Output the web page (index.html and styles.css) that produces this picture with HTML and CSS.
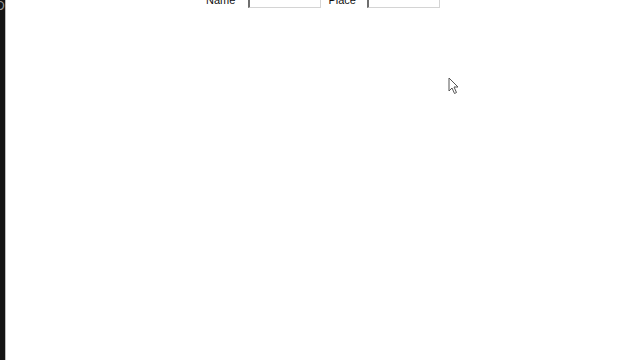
FILE: index.html
```html
<!DOCTYPE html>
<html>
<head>
<meta charset="utf-8">
<link rel="stylesheet" href="styles.css">
</head>
<body>
<div class="page">
  <div class="strip"><span class="strip-text">D</span></div>
  <main class="main">
    <form class="row">
      <label class="lbl">Name</label>
      <input class="field" type="text">
      <label class="lbl lbl-place">Place</label>
      <input class="field" type="text">
    </form>
  </main>
</div>
<svg class="cursor" width="12" height="18" viewBox="0 0 12 18">
  <path d="M1 1 L1 14 L4 11 L6.5 16.5 L8.5 15.5 L6 10 L10 10 Z" fill="#fff" stroke="#555" stroke-width="1" stroke-linejoin="round"/>
</svg>
</body>
</html>
```
FILE: styles.css
```css
html, body {
  margin: 0;
  padding: 0;
  height: 100%;
  background: #fff;
  overflow: hidden;
}
.page {
  display: flex;
  height: 360px;
  width: 640px;
}
.strip {
  width: 5px;
  background: #141414;
  border-right: 1px solid #bdbdbd;
  overflow: hidden;
  position: relative;
}
.strip-text {
  position: absolute;
  left: -4px;
  top: -1px;
  color: #9a9a9a;
  font: 12px "Liberation Sans", Arial, sans-serif;
}
.main {
  flex: 1;
  display: flex;
  justify-content: center;
  align-items: flex-start;
}
.row {
  display: flex;
  align-items: center;
  margin: -10px 0 0 0;
  font: 11px "Liberation Sans", Arial, sans-serif;
  color: #111;
}
.lbl {
  margin-right: 13px;
  padding-top: 1px;
}
.lbl-place {
  margin-right: 11px;
}
.field {
  width: 70px;
  height: 16px;
  padding: 0;
  margin: 0 7px 0 0;
  border: 1px solid #d4d4d4;
  border-left: 2px solid #6e6e6e;
  background: #fff;
  box-sizing: content-box;
}
.field:last-child {
  margin-right: 0;
}
.cursor {
  position: absolute;
  left: 448px;
  top: 77px;
}
```
